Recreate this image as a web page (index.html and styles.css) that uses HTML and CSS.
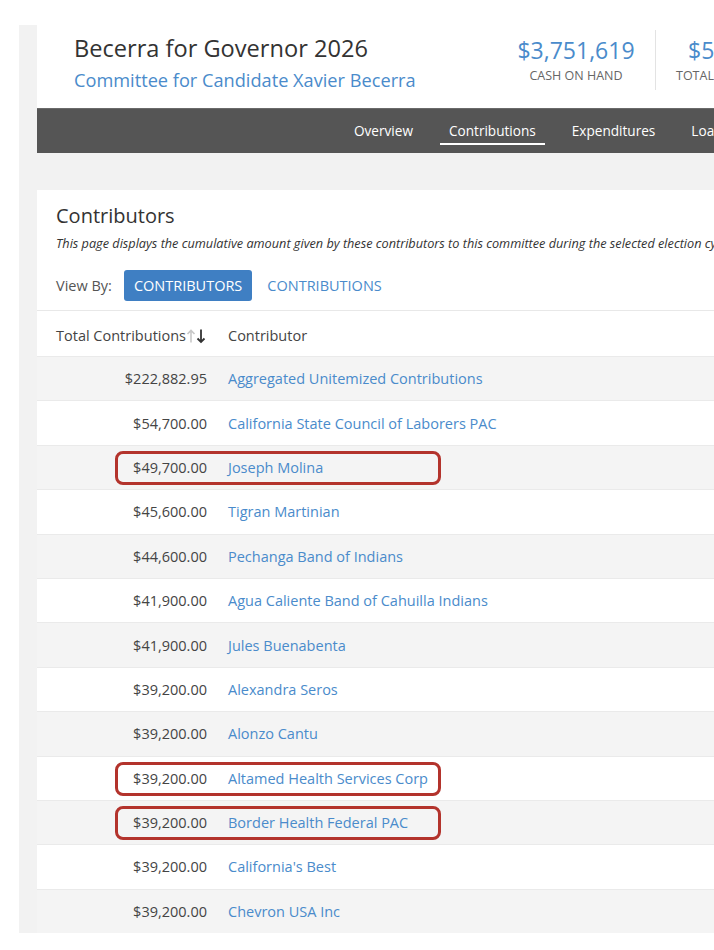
FILE: index.html
```html
<!DOCTYPE html>
<html lang="en">
<head>
    <meta charset="UTF-8">
    <meta name="viewport" content="width=device-width, initial-scale=1.0">
    <title>Becerra for Governor 2026 - Contributors</title>
    <link rel="stylesheet" href="styles.css">
</head>
<body>
    <div class="page">
        <!-- Committee header -->
        <div class="header">
            <div class="title-block">
                <h1>Becerra for Governor 2026</h1>
                <a class="subtitle" href="#">Committee for Candidate Xavier Becerra</a>
            </div>
            <div class="stat">
                <div class="stat-value">$3,751,619</div>
                <div class="stat-label">CASH ON HAND</div>
            </div>
            <div class="stat stat-last">
                <div class="stat-value">$5,204,113</div>
                <div class="stat-label">TOTAL RAISED</div>
            </div>
        </div>

        <!-- Tabs -->
        <div class="nav">
            <a href="#">Overview</a>
            <a href="#" class="active">Contributions</a>
            <a href="#">Expenditures</a>
            <a href="#">Loans</a>
        </div>

        <!-- Contributors card -->
        <div class="card">
            <div class="card-top">
                <h2>Contributors</h2>
                <p class="note">This page displays the cumulative amount given by these contributors to this committee during the selected election cycle.</p>
                <div class="view-by">
                    <span>View By:</span>
                    <button class="btn-active">CONTRIBUTORS</button>
                    <button class="btn-link">CONTRIBUTIONS</button>
                </div>
            </div>

            <div class="table">
                <div class="row head">
                    <div class="amount">Total Contributions<svg class="sort" width="21" height="16" viewBox="0 0 21 16"><path d="M5 14.5V2.5M1.5 6L5 2.5 8.5 6" fill="none" stroke="#c8c8c8" stroke-width="1.6"/><path d="M15 1.5v12.5M11.5 10.5L15 14l3.5-3.5" fill="none" stroke="#333" stroke-width="1.8"/></svg></div>
                    <div class="name">Contributor</div>
                </div>
                <div class="row"><div class="amount">$222,882.95</div><a class="name" href="#">Aggregated Unitemized Contributions</a></div>
                <div class="row"><div class="amount">$54,700.00</div><a class="name" href="#">California State Council of Laborers PAC</a></div>
                <div class="row marked"><div class="amount">$49,700.00</div><a class="name" href="#">Joseph Molina</a><span class="ring"></span></div>
                <div class="row"><div class="amount">$45,600.00</div><a class="name" href="#">Tigran Martinian</a></div>
                <div class="row"><div class="amount">$44,600.00</div><a class="name" href="#">Pechanga Band of Indians</a></div>
                <div class="row"><div class="amount">$41,900.00</div><a class="name" href="#">Agua Caliente Band of Cahuilla Indians</a></div>
                <div class="row"><div class="amount">$41,900.00</div><a class="name" href="#">Jules Buenabenta</a></div>
                <div class="row"><div class="amount">$39,200.00</div><a class="name" href="#">Alexandra Seros</a></div>
                <div class="row"><div class="amount">$39,200.00</div><a class="name" href="#">Alonzo Cantu</a></div>
                <div class="row marked"><div class="amount">$39,200.00</div><a class="name" href="#">Altamed Health Services Corp</a><span class="ring"></span></div>
                <div class="row marked"><div class="amount">$39,200.00</div><a class="name" href="#">Border Health Federal PAC</a><span class="ring"></span></div>
                <div class="row"><div class="amount">$39,200.00</div><a class="name" href="#">California's Best</a></div>
                <div class="row"><div class="amount">$39,200.00</div><a class="name" href="#">Chevron USA Inc</a></div>
            </div>
        </div>
    </div>
</body>
</html>
```

FILE: styles.css
```css
body {
    margin: 0;
    background-color: #fff;
    font-family: "Open Sans", Arial, sans-serif;
    color: #333;
    overflow: hidden;
}
a {
    color: #4a8bcb;
    text-decoration: none;
}
.page {
    margin: 25px 0 0 19px;
    width: 1100px;
    height: 908px;
    padding-left: 18px;
    background-color: #f2f2f2;
    overflow: hidden;
    box-sizing: border-box;
}
.header {
    background-color: #fff;
    height: 83px;
    display: flex;
    align-items: flex-start;
    padding-left: 37px;
}
.title-block {
    width: 423px;
    padding-top: 8px;
}
h1 {
    margin: 0;
    font-size: 23.6px;
    font-weight: 400;
    line-height: 30px;
    color: #333;
}
.subtitle {
    display: block;
    margin-top: 4px;
    font-size: 18.2px;
    line-height: 26px;
}
.stat {
    width: 158px;
    margin-top: 5px;
    height: 60px;
    text-align: center;
    border-right: 1px solid #e3e3e3;
}
.stat-last {
    border-right: none;
    margin-left: 20px;
    text-align: left;
}
.stat-value {
    padding-top: 4px;
    font-size: 23px;
    line-height: 32px;
    color: #4a8bcb;
}
.stat-label {
    margin-top: 2px;
    font-size: 12.5px;
    line-height: 16px;
    color: #666;
}
.stat-last .stat-value {
    padding-left: 12px;
}
.nav {
    height: 45px;
    background-color: #555;
    display: flex;
    gap: 18px;
    padding-left: 308px;
    border-top: 1px solid #6a6a6a;
    box-sizing: border-box;
}
.nav a {
    color: #fff;
    font-size: 13.6px;
    padding: 0 9px;
    line-height: 44px;
    position: relative;
}
.nav a.active::after {
    content: "";
    position: absolute;
    left: 0;
    right: 0;
    bottom: 8px;
    height: 2px;
    background-color: #fff;
}
.card {
    margin-top: 37px;
    background-color: #fff;
    height: 800px;
}
.card-top {
    padding: 12px 19px 9px;
}
h2 {
    margin: 0;
    font-size: 20px;
    font-weight: 400;
    line-height: 28px;
}
.note {
    margin: 0;
    font-size: 12.7px;
    font-style: italic;
    line-height: 26px;
    white-space: nowrap;
}
.view-by {
    display: flex;
    align-items: center;
    margin-top: 14px;
    font-size: 14.5px;
    color: #555;
}
.view-by span {
    margin-right: 12px;
}
.view-by button {
    font-family: inherit;
    font-size: 14.5px;
    height: 31px;
    padding: 0 10px;
    border: none;
    border-radius: 3px;
    cursor: pointer;
}
.btn-active {
    background-color: #3f7fc3;
    color: #fff;
}
.btn-link {
    background: none;
    color: #4a8bcb;
    margin-left: 5px;
}
.table {
    border-top: 1px solid #e8e8e8;
}
.row {
    display: flex;
    align-items: center;
    height: 44.4px;
    border-bottom: 1px solid #eaeaea;
    box-sizing: border-box;
    font-size: 14.5px;
    position: relative;
}
.row:nth-child(even) {
    background-color: #f4f4f4;
}
.row.head {
    height: 46px;
    padding-top: 4px;
    background-color: #fff;
    color: #444;
}
.amount {
    width: 151px;
    margin-left: 19px;
    text-align: right;
    display: flex;
    align-items: center;
    justify-content: flex-end;
    color: #444;
    white-space: nowrap;
}
.head .amount {
    justify-content: flex-start;
}
.name {
    margin-left: 21px;
}
.ring {
    position: absolute;
    left: 78px;
    width: 326px;
    top: 5px;
    bottom: 4px;
    border: 3px solid #b3332c;
    border-radius: 8px;
    box-sizing: border-box;
    pointer-events: none;
}
```
